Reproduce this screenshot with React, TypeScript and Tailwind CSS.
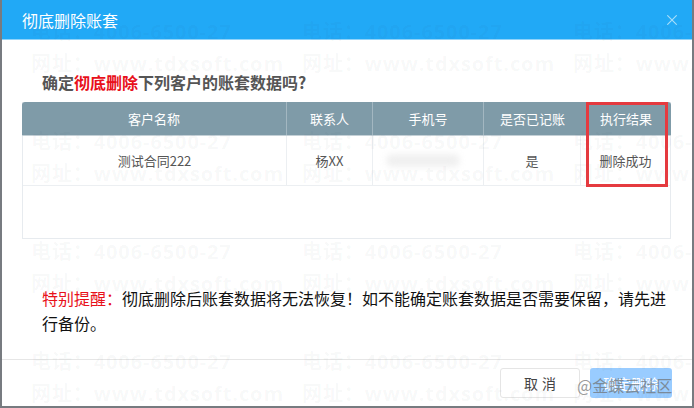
const font = '[font-family:"Noto_Sans_CJK_SC","Liberation_Sans",sans-serif]';

const phoneLine = "电话\uFF1A4006-6500-27";
const siteLine = "网址\uFF1Awww.tdxsoft.com";
const warnLabel = "特别提醒\uFF1A";
const warnBody =
  "彻底删除后账套数据将无法恢复\uFF01如不能确定账套数据是否需要保留\uFF0C请先进行备份\u3002";

function Watermark() {
  const rows = [0, 1, 2, 3];
  const cols = [0, 1, 2];
  return (
    <div className="pointer-events-none absolute inset-0 overflow-hidden pl-[29px] pt-[17px]">
      {rows.map((r) => (
        <div key={r} className="flex h-[110px]">
          {cols.map((c) => (
            <div
              key={c}
              className="w-[271px] shrink-0 font-['Open_Sans','Noto_Sans_CJK_SC',sans-serif] text-[20px] leading-[30px] font-bold tracking-[0.9px] whitespace-nowrap text-[rgba(60,70,90,0.045)]"
            >
              <div>{phoneLine}</div>
              <div className="mt-[2px]">{siteLine}</div>
            </div>
          ))}
        </div>
      ))}
    </div>
  );
}

const colClass = ["w-[265px]", "w-[86px]", "w-[111px]", "w-[97px]", "flex-1"];
const heads = ["客户名称", "联系人", "手机号", "是否已记账", "执行结果"];

export default function App() {
  return (
    <div className={`h-[408px] w-[694px] overflow-hidden bg-[#777b80] pr-[2px] pb-[2px] pl-[2px] ${font}`}>
      <div className="relative flex h-[406px] flex-col overflow-hidden bg-white">
        <header className="flex h-[40px] shrink-0 items-center justify-between border-b border-[#8fd3fa] bg-[#21a9f6] pr-[15px] pl-[20px]">
          <span className="text-[16px] text-white">彻底删除账套</span>
          <svg width="10" height="10" viewBox="0 0 10 10" className="mt-[1px]">
            <path d="M0.3 0.3 L9.7 9.7 M9.7 0.3 L0.3 9.7" stroke="#a9def9" strokeWidth="1.1" fill="none" />
          </svg>
        </header>

        <main className="flex h-[319px] flex-col px-[20px]">
          <h1 className="mt-[29px] pl-[20px] text-[16px] leading-[26px] font-bold text-[#555]">
            确定<span className="text-[#e8101a]">彻底删除</span>下列客户的账套数据吗?
          </h1>

          <div className="mt-[7px] flex h-[137px] w-[649px] flex-col border-r border-b border-l border-[#e7ebef]">
            <div className="-mx-px flex h-[34px] shrink-0 rounded-t-[3px] border-b border-[#c4d0d6] bg-[#7f9ba8] text-[13px] text-white">
              {heads.map((h, i) => (
                <div
                  key={h}
                  className={`flex items-center justify-center ${colClass[i]} ${i < 3 ? "border-r border-[#a3b7c1]" : ""}`}
                >
                  {h}
                </div>
              ))}
            </div>
            <div className="flex h-[50px] shrink-0 border-b border-[#eceff2] text-[13px] text-[#555]">
              <div className="flex w-[264px] items-center justify-center border-r border-[#eceff2]">测试合同222</div>
              <div className="flex w-[86px] items-center justify-center border-r border-[#eceff2]">杨XX</div>
              <div className="flex w-[111px] items-center justify-center border-r border-[#eceff2]">
                <div className="mr-[10px] h-[13px] w-[74px] rounded-full bg-[#f0f0f0] blur-[3px]" />
              </div>
              <div className="flex w-[97px] items-center justify-center border-r border-[#eceff2]">是</div>
              <div className="flex flex-1 items-center justify-center">删除成功</div>
            </div>
          </div>

          <p className="mt-[47px] pr-[4px] pl-[20px] text-[16px] leading-[25px] text-[#111]">
            <span className="text-[#e8101a]">{warnLabel}</span>
            {warnBody}
          </p>
        </main>

        <footer className="flex flex-1 items-start justify-end gap-[10px] border-t border-[#e6e6e6] pt-[8px] pr-[20px]">
          <button className="h-[30px] w-[80px] rounded-[3px] border border-[#e5e5e5] bg-white pl-[4px] text-[14px] tracking-[4px] text-[#444]">
            取消
          </button>
          <button className="h-[30px] w-[82px] rounded-[3px] bg-[#99ccff] text-[14px] text-white">确定删除</button>
        </footer>

        <Watermark />

        <div className="pointer-events-none absolute top-[102px] left-[584px] h-[85px] w-[82px] border-[3px] border-[#e53a3f]" />
        <span className="pointer-events-none absolute top-[374px] left-[575px] text-[16px] leading-[22px] whitespace-nowrap text-[rgba(110,110,110,0.7)]">
          @金蝶云社区
        </span>
      </div>
    </div>
  );
}
